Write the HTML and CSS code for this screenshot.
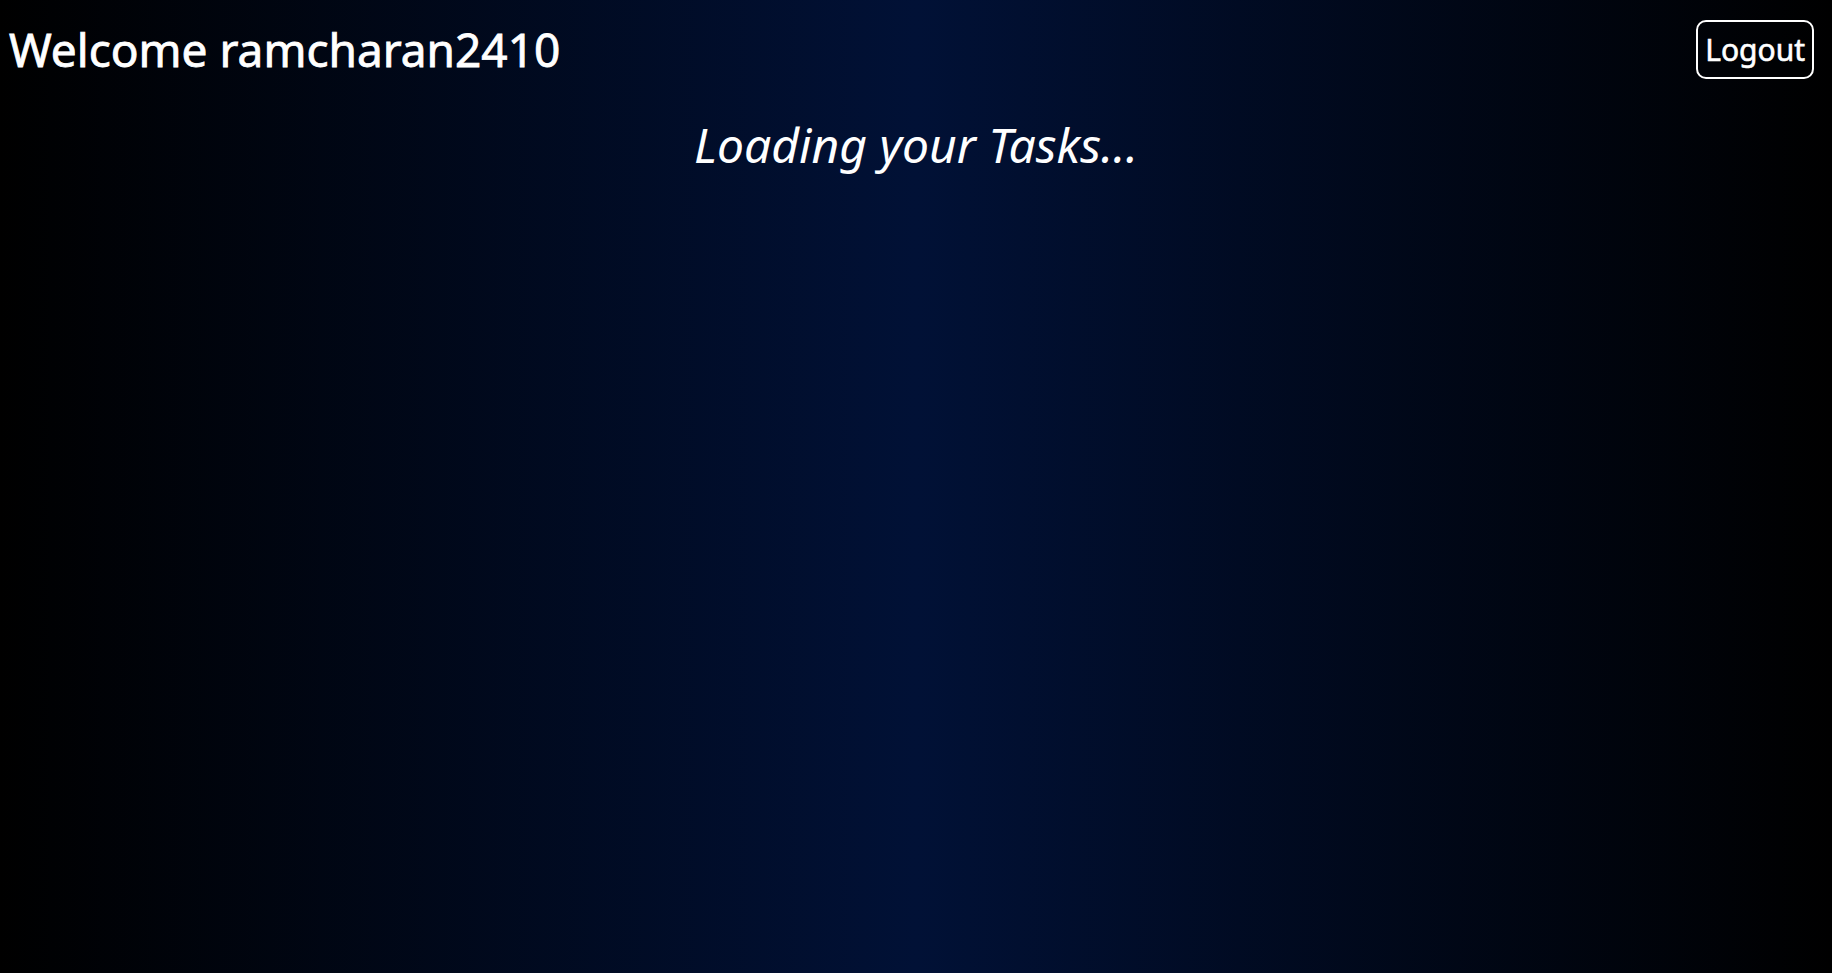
FILE: index.html
```html
<!DOCTYPE html>
<html>
<head>
<meta charset="utf-8">
<link rel="stylesheet" href="styles.css">
</head>
<body>
<div class="page">
  <header class="topbar">
    <h1 class="welcome">Welcome ramcharan2410</h1>
    <button class="logout">Logout</button>
  </header>
  <p class="loading">Loading your Tasks...</p>
</div>
</body>
</html>
```
FILE: styles.css
```css
html, body {
  margin: 0;
  padding: 0;
  height: 100%;
}
body {
  background: linear-gradient(to right, #000000, #011136 50%, #000000);
  color: #ffffff;
  font-family: "Noto Sans", "Open Sans", sans-serif;
}
.page {
  min-height: 100vh;
}
.topbar {
  display: flex;
  justify-content: space-between;
  align-items: center;
  padding: 20px 18px 0 9px;
}
.welcome {
  margin: -2px 0 0;
  font-size: 46px;
  font-weight: 400;
  -webkit-text-stroke: 0.8px #ffffff;
  line-height: 60px;
}
.logout {
  background: transparent;
  color: #ffffff;
  border: 2.5px solid #ffffff;
  border-radius: 10px;
  font-family: "Noto Sans", "Open Sans", sans-serif;
  font-size: 30px;
  font-weight: 400;
  -webkit-text-stroke: 0.6px #ffffff;
  padding: 4px 7px;
  line-height: 48px;
  height: 59px;
  cursor: pointer;
}
.loading {
  margin: 34px 0 0;
  text-align: center;
  font-style: italic;
  font-size: 48px;
  line-height: 64px;
}
```
